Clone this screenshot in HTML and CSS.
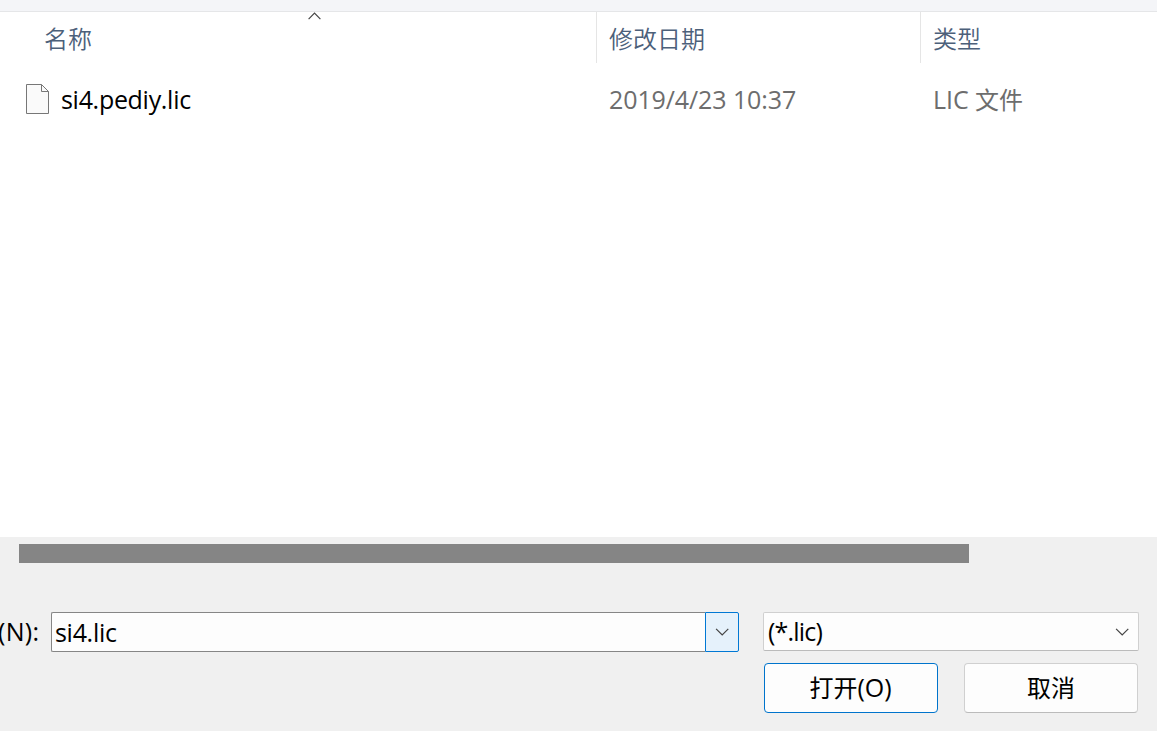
FILE: index.html
```
<!DOCTYPE html>
<html lang="zh-CN">
<head>
  <meta charset="UTF-8">
  <meta name="viewport" content="width=device-width, initial-scale=1.0">
  <title>打开</title>
  <link rel="stylesheet" href="styles.css">
</head>
<body>

  <!-- File List -->
  <main class="file-list">
    <div class="columns header-row">
      <div class="column name">
        <span>名称</span>
        <svg class="sort-arrow" width="14" height="8" viewBox="0 0 14 8"><path d="M0.6 7.2L6.5 1.2L12.4 7.2"/></svg>
      </div>
      <div class="column">修改日期</div>
      <div class="column">类型</div>
    </div>
    <div class="columns file-row">
      <div class="file-name">
        <svg width="23" height="30" viewBox="0 0 23 30">
          <path class="page" d="M0.5 0.5H15.5L22.5 7.5V29.5H0.5Z"/>
          <path class="fold" d="M15.5 0.5V7.5H22.5"/>
        </svg>
        <span class="latin">si4.pediy.lic</span>
      </div>
      <div class="file-date latin">2019/4/23 10:37</div>
      <div class="file-type"><span class="latin">LIC</span> 文件</div>
    </div>
  </main>

  <!-- Bottom Panel -->
  <footer class="panel">
    <div class="scrollbar"></div>
    <div class="fields">
      <label class="latin" for="fileName">(N):</label>
      <div class="combo">
        <input class="latin" type="text" id="fileName" value="si4.lic">
        <button class="drop" aria-label="展开">
          <svg width="14" height="8" viewBox="0 0 14 8"><path d="M1.1 0.8L7.2 7L13.3 0.8"/></svg>
        </button>
      </div>
      <div class="filter">
        <span class="latin">(*.lic)</span>
        <svg width="14" height="8" viewBox="0 0 14 8"><path d="M1.1 0.8L7.2 7L13.3 0.8"/></svg>
      </div>
    </div>
    <div class="actions">
      <button class="btn primary">打开<span class="latin">(O)</span></button>
      <button class="btn">取消</button>
    </div>
  </footer>

</body>
</html>
```

FILE: styles.css
```
/* Basic Reset */
* {
  margin: 0;
  padding: 0;
  box-sizing: border-box;
}

body {
  height: 731px;
  display: flex;
  flex-direction: column;
  overflow: hidden;
  font-family: "Open Sans", "Noto Sans CJK SC", sans-serif;
  font-size: 24px;
  line-height: 32px;
  color: #000;
  background-color: #fff;
  white-space: nowrap;
}

button,
input {
  font: inherit;
  color: inherit;
}

svg {
  display: block;
  flex: none;
  fill: none;
  stroke: #444;
  stroke-width: 1.2;
}

.latin {
  font-size: 25px;
  letter-spacing: -0.3px;
}

/* File List */
.file-list {
  height: 537px;
  border-top: 11px solid #f4f5f8;
}

.columns {
  display: grid;
  grid-template-columns: 597px 324px 1fr;
}

.header-row {
  border-top: 1px solid #e5e6e8;
  color: #4c607a;
  font-weight: 350;
}

.column {
  position: relative;
  height: 51px;
  padding: 11px 0 0 12px;
  border-right: 1px solid #e5e5e5;
}

.column.name {
  padding-left: 44px;
}

.column:last-child {
  border-right: none;
}

.sort-arrow {
  position: absolute;
  top: 0;
  left: 308px;
}

.file-row {
  align-items: center;
  height: 72px;
  color: #6d6d6d;
}

.file-name {
  display: flex;
  align-items: center;
  gap: 12px;
  padding-left: 26px;
  color: #000;
}

.page {
  fill: #fafafa;
  stroke: #777;
  stroke-width: 1;
}

.fold {
  stroke: #777;
  stroke-width: 1;
}

.file-date,
.file-type {
  padding-left: 12px;
}

.file-date {
  letter-spacing: -0.1px;
}

.file-type .latin {
  letter-spacing: 0;
}

/* Bottom Panel */
.panel {
  flex: 1;
  padding: 7px 18px 0 0;
  background-color: #f0f0f0;
}

.scrollbar {
  width: 950px;
  height: 19px;
  margin-left: 19px;
  background-color: #858585;
}

.fields {
  display: grid;
  grid-template-columns: 51px 688px 376px;
  margin-top: 49px;
  height: 40px;
}

.fields label {
  padding-top: 3px;
  margin-left: -2px;
  letter-spacing: 0.3px;
}

.combo {
  display: flex;
}

.combo input {
  flex: 1;
  min-width: 0;
  padding: 0 0 1px 3px;
  border: 1px solid #868686;
  border-right: none;
  border-radius: 2px 0 0 2px;
  background-color: #fdfdfd;
  outline: none;
}

.drop {
  display: flex;
  align-items: center;
  justify-content: center;
  width: 34px;
  border: 1px solid #0078d4;
  border-radius: 0 2px 2px 0;
  background-color: #e5f1fb;
}

.filter {
  display: flex;
  align-items: center;
  justify-content: space-between;
  width: 376px;
  height: 39px;
  margin-left: 24px;
  padding: 0 9px 0 4px;
  border: 1px solid #d0d0d0;
  border-bottom-color: #bbb;
  border-radius: 2px;
  background-color: #fdfdfd;
}

.filter .latin {
  padding-bottom: 2px;
  letter-spacing: -0.8px;
}

/* Buttons */
.actions {
  display: flex;
  justify-content: flex-end;
  gap: 26px;
  margin-top: 11px;
  padding-right: 1px;
}

.btn {
  width: 174px;
  height: 50px;
  border: 1px solid #d0d0d0;
  border-bottom-color: #bbb;
  border-radius: 4px;
  background-color: #fdfdfd;
}

.btn.primary {
  padding: 0 1px 2px 0;
  border-color: #0074cc;
}

.btn .latin {
  letter-spacing: 0;
}
```
